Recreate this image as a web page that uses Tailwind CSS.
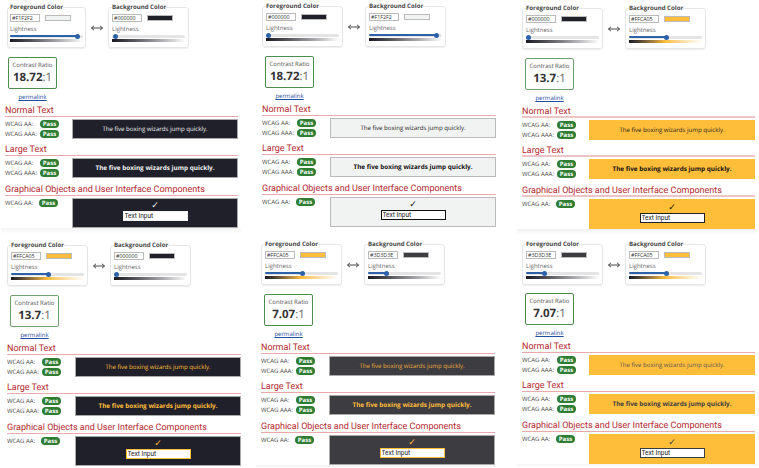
<!DOCTYPE html>
<html lang="en">
<head>
<meta charset="utf-8">
<title>Contrast ratio comparison</title>
<script src="https://cdn.jsdelivr.net/npm/@tailwindcss/browser@4"></script>
</head>
<body class="bg-white">
<main class="w-[759px] h-[468px] overflow-hidden grid grid-cols-[255px_255px_249px] grid-rows-[234px_234px] font-['Open_Sans',sans-serif] text-[#444] whitespace-nowrap [text-rendering:geometricPrecision]">

<!-- Panel 1 -->
<section class="pt-[3px] pl-[7px] w-[240px]">
  <div class="flex h-[45px]">
    <fieldset class="w-[78px] h-[45px] border border-[#e6e6e6] rounded-[3px] px-[2px] shadow-[0_1px_1px_#eee]">
      <legend class="px-0 text-[6.100px] leading-[8px] font-bold">Foreground Color</legend>
      <div class="flex items-center gap-[5px] mt-[3px]"><input readonly value="#F1F2F2" class="w-[30px] h-[8px] border border-[#bbb] px-[1px] text-[5.300px] leading-[6px] text-[#333]"><span class="w-[26px] h-[6px] border border-[#bbb] bg-[#f1f2f2]"></span></div>
      <p class="text-[6px] leading-[8px] mt-[3px] text-[#666]">Lightness</p>
      <div class="relative h-[3px] mt-[2px] w-[73px] bg-[#e4e4e4] rounded-full"><div class="h-[2px] w-[67px] bg-[#2d62a8] rounded-full"></div><span class="absolute left-[65px] -top-[1px] w-[5px] h-[5px] rounded-full bg-[#2d62a8]"></span></div>
      <div class="h-[3px] mt-[1px] w-[73px] bg-linear-to-r from-[#1a1a22] to-white"></div>
    </fieldset>
    <div class="w-[22px] h-[41px] mt-[4px] flex items-center justify-center"><svg width="12" height="6" viewBox="0 0 12 6" fill="none" stroke="#333" stroke-width=".9"><path d="M.5 3h11M3 .8.5 3 3 5.2M9 .8 11.500 3 9 5.200"/></svg></div>
    <fieldset class="w-[81px] h-[45px] border border-[#e6e6e6] rounded-[3px] px-[3px] shadow-[0_1px_1px_#eee]">
      <legend class="px-0 text-[6.100px] leading-[8px] font-bold">Background Color</legend>
      <div class="flex items-center gap-[5px] mt-[3px]"><input readonly value="#000000" class="w-[30px] h-[8px] border border-[#bbb] px-[1px] text-[5.300px] leading-[6px] text-[#333]"><span class="w-[26px] h-[6px] border border-[#bbb] bg-[#1f2029]"></span></div>
      <p class="text-[6px] leading-[8px] mt-[3px] text-[#666]">Lightness</p>
      <div class="relative h-[3px] mt-[2px] w-[73px] bg-[#e4e4e4] rounded-full"><span class="absolute left-[1px] -top-[1px] w-[5px] h-[5px] rounded-full bg-[#2d62a8]"></span></div>
      <div class="h-[3px] mt-[1px] w-[73px] bg-linear-to-r from-[#1a1a22] to-white"></div>
    </fieldset>
  </div>
  <div class="ml-[1px] w-[49px] h-[32px] mt-[9px] border border-[#4c8c4c] rounded-[2px] text-center pt-[3px]"><p class="text-[6px] leading-[9px] text-[#555]">Contrast Ratio</p><p class="text-[11.500px] leading-[16px] text-[#333]"><b>18.72</b><span class="text-[#666]">:1</span></p></div>
  <p class="ml-[1px] w-[49px] mt-[3px] h-[10px] text-center text-[6px] leading-[10px] text-[#1f4f9e] underline">permalink</p>
  <div class="-ml-[2px] w-[233px]">
    <h2 class="h-[15px] font-['Roboto',sans-serif] text-[9px] leading-[18px] text-[#b5282f] border-b border-[#e9a9ad]">Normal Text</h2>
    <div class="flex mt-[2px]"><div class="w-[67px] h-[20px] text-[6px]"><p class="flex items-center h-[10px]"><span class="w-[35px]">WCAG AA:</span><b class="w-[19px] h-[8.500px] rounded-full bg-[#2e7d32] text-white text-center leading-[8.500px]">Pass</b></p><p class="flex items-center h-[10px]"><span class="w-[35px]">WCAG AAA:</span><b class="w-[19px] h-[8.500px] rounded-full bg-[#2e7d32] text-white text-center leading-[8.500px]">Pass</b></p></div><div class="w-[166px] h-[20px] flex items-center justify-center bg-[#1f2029] border border-[#aaa] text-[6.100px] text-[#f1f2f2]">The five boxing wizards jump quickly.</div></div>
    <h2 class="h-[17px] font-['Roboto',sans-serif] text-[9px] leading-[22px] text-[#b5282f] border-b border-[#e9a9ad]">Large Text</h2>
    <div class="flex mt-[2px]"><div class="w-[67px] h-[20px] text-[6px]"><p class="flex items-center h-[10px]"><span class="w-[35px]">WCAG AA:</span><b class="w-[19px] h-[8.500px] rounded-full bg-[#2e7d32] text-white text-center leading-[8.500px]">Pass</b></p><p class="flex items-center h-[10px]"><span class="w-[35px]">WCAG AAA:</span><b class="w-[19px] h-[8.500px] rounded-full bg-[#2e7d32] text-white text-center leading-[8.500px]">Pass</b></p></div><div class="w-[166px] h-[20px] flex items-center justify-center bg-[#1f2029] border border-[#aaa] text-[6.400px] font-bold text-[#f1f2f2]">The five boxing wizards jump quickly.</div></div>
    <h2 class="h-[18px] font-['Roboto',sans-serif] text-[9px] leading-[24px] text-[#b5282f] border-b border-[#e9a9ad]">Graphical Objects and User Interface Components</h2>
    <div class="flex mt-[2px]"><div class="w-[67px] h-[10px] text-[6px]"><p class="flex items-center h-[10px]"><span class="w-[34px]">WCAG AA:</span><b class="w-[19px] h-[8.500px] rounded-full bg-[#2e7d32] text-white text-center leading-[8.500px]">Pass</b></p></div><div class="w-[166px] h-[30px] flex flex-col items-center justify-end pb-[6px] bg-[#1f2029] border border-[#aaa]"><span class="font-['DejaVu_Sans',sans-serif] text-[9px] leading-[10px] text-[#f1f2f2]">✓</span><input readonly value="Text Input" class="w-[65px] h-[10px] bg-white border border-[#f1f2f2] px-[1px] font-['Roboto',sans-serif] text-[6.500px] text-[#222]"></div></div>
    <div class="h-[6px] -ml-[4px] w-[240px] bg-linear-to-b from-[#f4f4f4] to-white"></div>
  </div>
</section>

<!-- Panel 2 -->
<section class="pt-[2px] pl-[7px] w-[240px]">
  <div class="flex h-[45px]">
    <fieldset class="w-[80px] h-[45px] border border-[#e6e6e6] rounded-[3px] px-[3px] shadow-[0_1px_1px_#eee]">
      <legend class="px-0 text-[6.100px] leading-[8px] font-bold">Foreground Color</legend>
      <div class="flex items-center gap-[5px] mt-[3px]"><input readonly value="#000000" class="w-[30px] h-[8px] border border-[#bbb] px-[1px] text-[5.300px] leading-[6px] text-[#333]"><span class="w-[26px] h-[6px] border border-[#bbb] bg-[#1f2029]"></span></div>
      <p class="text-[6px] leading-[8px] mt-[3px] text-[#666]">Lightness</p>
      <div class="relative h-[3px] mt-[2px] w-[73px] bg-[#e4e4e4] rounded-full"><span class="absolute left-[0px] -top-[1px] w-[5px] h-[5px] rounded-full bg-[#2d62a8]"></span></div>
      <div class="h-[3px] mt-[1px] w-[73px] bg-linear-to-r from-[#1a1a22] to-white"></div>
    </fieldset>
    <div class="w-[22px] h-[41px] mt-[4px] flex items-center justify-center"><svg width="12" height="6" viewBox="0 0 12 6" fill="none" stroke="#333" stroke-width=".9"><path d="M.5 3h11M3 .8.5 3 3 5.2M9 .8 11.500 3 9 5.200"/></svg></div>
    <fieldset class="w-[81px] h-[45px] border border-[#e6e6e6] rounded-[3px] px-[3px] shadow-[0_1px_1px_#eee]">
      <legend class="px-0 text-[6.100px] leading-[8px] font-bold">Background Color</legend>
      <div class="flex items-center gap-[5px] mt-[3px]"><input readonly value="#F1F2F2" class="w-[30px] h-[8px] border border-[#bbb] px-[1px] text-[5.300px] leading-[6px] text-[#333]"><span class="w-[26px] h-[6px] border border-[#bbb] bg-[#f1f2f2]"></span></div>
      <p class="text-[6px] leading-[8px] mt-[3px] text-[#666]">Lightness</p>
      <div class="relative h-[3px] mt-[2px] w-[73px] bg-[#e4e4e4] rounded-full"><div class="h-[2px] w-[67px] bg-[#2d62a8] rounded-full"></div><span class="absolute left-[65px] -top-[1px] w-[5px] h-[5px] rounded-full bg-[#2d62a8]"></span></div>
      <div class="h-[3px] mt-[1px] w-[73px] bg-linear-to-r from-[#1a1a22] to-white"></div>
    </fieldset>
  </div>
  <div class="ml-[3px] w-[49px] h-[32px] mt-[9px] border border-[#4c8c4c] rounded-[2px] text-center pt-[3px]"><p class="text-[6px] leading-[9px] text-[#555]">Contrast Ratio</p><p class="text-[11.500px] leading-[16px] text-[#333]"><b>18.72</b><span class="text-[#666]">:1</span></p></div>
  <p class="ml-[3px] w-[49px] mt-[3px] h-[10px] text-center text-[6px] leading-[10px] text-[#1f4f9e] underline">permalink</p>
  <div class="w-[234px]">
    <h2 class="h-[15px] font-['Roboto',sans-serif] text-[9px] leading-[18px] text-[#b5282f] border-b border-[#e9a9ad]">Normal Text</h2>
    <div class="flex mt-[2px]"><div class="w-[68px] h-[20px] text-[6px]"><p class="flex items-center h-[10px]"><span class="w-[35px]">WCAG AA:</span><b class="w-[19px] h-[8.500px] rounded-full bg-[#2e7d32] text-white text-center leading-[8.500px]">Pass</b></p><p class="flex items-center h-[10px]"><span class="w-[35px]">WCAG AAA:</span><b class="w-[19px] h-[8.500px] rounded-full bg-[#2e7d32] text-white text-center leading-[8.500px]">Pass</b></p></div><div class="w-[166px] h-[20px] flex items-center justify-center bg-[#f1f2f2] border border-[#bbb] text-[6.100px] text-[#222]">The five boxing wizards jump quickly.</div></div>
    <h2 class="h-[17px] font-['Roboto',sans-serif] text-[9px] leading-[22px] text-[#b5282f] border-b border-[#e9a9ad]">Large Text</h2>
    <div class="flex mt-[2px]"><div class="w-[68px] h-[20px] text-[6px]"><p class="flex items-center h-[10px]"><span class="w-[35px]">WCAG AA:</span><b class="w-[19px] h-[8.500px] rounded-full bg-[#2e7d32] text-white text-center leading-[8.500px]">Pass</b></p><p class="flex items-center h-[10px]"><span class="w-[35px]">WCAG AAA:</span><b class="w-[19px] h-[8.500px] rounded-full bg-[#2e7d32] text-white text-center leading-[8.500px]">Pass</b></p></div><div class="w-[166px] h-[20px] flex items-center justify-center bg-[#f1f2f2] border border-[#bbb] text-[6.400px] font-bold text-[#111]">The five boxing wizards jump quickly.</div></div>
    <h2 class="h-[18px] font-['Roboto',sans-serif] text-[9px] leading-[24px] text-[#b5282f] border-b border-[#e9a9ad]">Graphical Objects and User Interface Components</h2>
    <div class="flex mt-[2px]"><div class="w-[68px] h-[10px] text-[6px]"><p class="flex items-center h-[10px]"><span class="w-[34px]">WCAG AA:</span><b class="w-[19px] h-[8.500px] rounded-full bg-[#2e7d32] text-white text-center leading-[8.500px]">Pass</b></p></div><div class="w-[166px] h-[30px] flex flex-col items-center justify-end pb-[6px] bg-[#f1f2f2] border border-[#bbb]"><span class="font-['DejaVu_Sans',sans-serif] text-[9px] leading-[10px] text-[#111]">✓</span><input readonly value="Text Input" class="w-[65px] h-[10px] bg-white border border-[#111] px-[1px] font-['Roboto',sans-serif] text-[6.500px] text-[#222]"></div></div>
  </div>
</section>

<!-- Panel 3 -->
<section class="pt-[4px] pl-[12px] w-[245px]">
  <div class="flex h-[45px]">
    <fieldset class="w-[80px] h-[45px] border border-[#e6e6e6] rounded-[3px] px-[3px] shadow-[0_1px_1px_#eee]">
      <legend class="px-0 text-[6.100px] leading-[8px] font-bold">Foreground Color</legend>
      <div class="flex items-center gap-[5px] mt-[3px]"><input readonly value="#000000" class="w-[30px] h-[8px] border border-[#bbb] px-[1px] text-[5.300px] leading-[6px] text-[#333]"><span class="w-[26px] h-[6px] border border-[#bbb] bg-[#1f2029]"></span></div>
      <p class="text-[6px] leading-[8px] mt-[3px] text-[#666]">Lightness</p>
      <div class="relative h-[3px] mt-[2px] w-[73px] bg-[#e4e4e4] rounded-full"><span class="absolute left-[0px] -top-[1px] w-[5px] h-[5px] rounded-full bg-[#2d62a8]"></span></div>
      <div class="h-[3px] mt-[1px] w-[73px] bg-linear-to-r from-[#1a1a22] to-white"></div>
    </fieldset>
    <div class="w-[22px] h-[41px] mt-[4px] flex items-center justify-center"><svg width="12" height="6" viewBox="0 0 12 6" fill="none" stroke="#333" stroke-width=".9"><path d="M.5 3h11M3 .8.5 3 3 5.2M9 .8 11.500 3 9 5.200"/></svg></div>
    <fieldset class="w-[81px] h-[45px] border border-[#e6e6e6] rounded-[3px] px-[3px] shadow-[0_1px_1px_#eee]">
      <legend class="px-0 text-[6.100px] leading-[8px] font-bold">Background Color</legend>
      <div class="flex items-center gap-[5px] mt-[3px]"><input readonly value="#FFCA05" class="w-[30px] h-[8px] border border-[#bbb] px-[1px] text-[5.300px] leading-[6px] text-[#333]"><span class="w-[26px] h-[6px] border border-[#bbb] bg-[#ffbe3a]"></span></div>
      <p class="text-[6px] leading-[8px] mt-[3px] text-[#666]">Lightness</p>
      <div class="relative h-[3px] mt-[2px] w-[73px] bg-[#e4e4e4] rounded-full"><div class="h-[2px] w-[37px] bg-[#2d62a8] rounded-full"></div><span class="absolute left-[35px] -top-[1px] w-[5px] h-[5px] rounded-full bg-[#2d62a8]"></span></div>
      <div class="h-[3px] mt-[1px] w-[73px] bg-linear-to-r from-[#1a1a22] via-[#ffbe3a] to-white"></div>
    </fieldset>
  </div>
  <div class="ml-[3px] w-[49px] h-[32px] mt-[9px] border border-[#6f9f6f] rounded-[2px] text-center pt-[3px]"><p class="text-[6px] leading-[9px] text-[#555]">Contrast Ratio</p><p class="text-[11.500px] leading-[16px] text-[#333]"><b>13.7</b><span class="text-[#666]">:1</span></p></div>
  <p class="ml-[3px] w-[49px] mt-[3px] h-[10px] text-center text-[6px] leading-[10px] text-[#1f4f9e] underline">permalink</p>
  <div class="w-[233px]">
    <h2 class="h-[15px] font-['Roboto',sans-serif] text-[9px] leading-[18px] text-[#b5282f] border-b-2 border-[#efc4c6]">Normal Text</h2>
    <div class="flex mt-[2px]"><div class="w-[67px] h-[20px] text-[6px]"><p class="flex items-center h-[10px]"><span class="w-[35px]">WCAG AA:</span><b class="w-[19px] h-[8.500px] rounded-full bg-[#2e7d32] text-white text-center leading-[8.500px]">Pass</b></p><p class="flex items-center h-[10px]"><span class="w-[35px]">WCAG AAA:</span><b class="w-[19px] h-[8.500px] rounded-full bg-[#2e7d32] text-white text-center leading-[8.500px]">Pass</b></p></div><div class="w-[166px] h-[20px] flex items-center justify-center bg-[#ffbe3a] text-[6.100px] text-[#222]">The five boxing wizards jump quickly.</div></div>
    <h2 class="h-[17px] font-['Roboto',sans-serif] text-[9px] leading-[22px] text-[#b5282f] border-b-2 border-[#efc4c6]">Large Text</h2>
    <div class="flex mt-[2px]"><div class="w-[67px] h-[20px] text-[6px]"><p class="flex items-center h-[10px]"><span class="w-[35px]">WCAG AA:</span><b class="w-[19px] h-[8.500px] rounded-full bg-[#2e7d32] text-white text-center leading-[8.500px]">Pass</b></p><p class="flex items-center h-[10px]"><span class="w-[35px]">WCAG AAA:</span><b class="w-[19px] h-[8.500px] rounded-full bg-[#2e7d32] text-white text-center leading-[8.500px]">Pass</b></p></div><div class="w-[166px] h-[20px] flex items-center justify-center bg-[#ffbe3a] text-[6.400px] font-bold text-[#111]">The five boxing wizards jump quickly.</div></div>
    <h2 class="h-[18px] font-['Roboto',sans-serif] text-[9px] leading-[24px] text-[#b5282f] border-b-2 border-[#efc4c6]">Graphical Objects and User Interface Components</h2>
    <div class="flex mt-[2px]"><div class="w-[67px] h-[10px] text-[6px]"><p class="flex items-center h-[10px]"><span class="w-[34px]">WCAG AA:</span><b class="w-[19px] h-[8.500px] rounded-full bg-[#2e7d32] text-white text-center leading-[8.500px]">Pass</b></p></div><div class="w-[166px] h-[30px] flex flex-col items-center justify-end pb-[6px] bg-[#ffbe3a]"><span class="font-['DejaVu_Sans',sans-serif] text-[9px] leading-[10px] text-[#111]">✓</span><input readonly value="Text Input" class="w-[65px] h-[10px] bg-white border border-[#222] px-[1px] font-['Roboto',sans-serif] text-[6.500px] text-[#222]"></div></div>
    <div class="h-[5px] -ml-[5px] w-[240px] bg-linear-to-b from-[#f0f0f0] to-white"></div>
  </div>
</section>

<!-- Panel 4 -->
<section class="pt-[7px] pl-[7px] w-[240px]">
  <div class="flex h-[45px]">
    <fieldset class="w-[80px] h-[45px] border border-[#e6e6e6] rounded-[3px] px-[3px] shadow-[0_1px_1px_#eee]">
      <legend class="px-0 text-[6.100px] leading-[8px] font-bold">Foreground Color</legend>
      <div class="flex items-center gap-[5px] mt-[3px]"><input readonly value="#FFCA05" class="w-[30px] h-[8px] border border-[#bbb] px-[1px] text-[5.300px] leading-[6px] text-[#333]"><span class="w-[26px] h-[6px] border border-[#bbb] bg-[#ffbe3a]"></span></div>
      <p class="text-[6px] leading-[8px] mt-[3px] text-[#666]">Lightness</p>
      <div class="relative h-[3px] mt-[2px] w-[73px] bg-[#e4e4e4] rounded-full"><div class="h-[2px] w-[37px] bg-[#2d62a8] rounded-full"></div><span class="absolute left-[35px] -top-[1px] w-[5px] h-[5px] rounded-full bg-[#2d62a8]"></span></div>
      <div class="h-[3px] mt-[1px] w-[73px] bg-linear-to-r from-[#1a1a22] via-[#ffbe3a] to-white"></div>
    </fieldset>
    <div class="w-[22px] h-[41px] mt-[4px] flex items-center justify-center"><svg width="12" height="6" viewBox="0 0 12 6" fill="none" stroke="#333" stroke-width=".9"><path d="M.5 3h11M3 .8.5 3 3 5.2M9 .8 11.500 3 9 5.200"/></svg></div>
    <fieldset class="w-[81px] h-[45px] border border-[#e6e6e6] rounded-[3px] px-[3px] shadow-[0_1px_1px_#eee]">
      <legend class="px-0 text-[6.100px] leading-[8px] font-bold">Background Color</legend>
      <div class="flex items-center gap-[5px] mt-[3px]"><input readonly value="#000000" class="w-[30px] h-[8px] border border-[#bbb] px-[1px] text-[5.300px] leading-[6px] text-[#333]"><span class="w-[26px] h-[6px] border border-[#bbb] bg-[#1f2029]"></span></div>
      <p class="text-[6px] leading-[8px] mt-[3px] text-[#666]">Lightness</p>
      <div class="relative h-[3px] mt-[2px] w-[73px] bg-[#e4e4e4] rounded-full"><span class="absolute left-[0px] -top-[1px] w-[5px] h-[5px] rounded-full bg-[#2d62a8]"></span></div>
      <div class="h-[3px] mt-[1px] w-[73px] bg-linear-to-r from-[#1a1a22] to-white"></div>
    </fieldset>
  </div>
  <div class="ml-[3px] w-[49px] h-[32px] mt-[9px] border border-[#6f9f6f] rounded-[2px] text-center pt-[3px]"><p class="text-[6px] leading-[9px] text-[#555]">Contrast Ratio</p><p class="text-[11.500px] leading-[16px] text-[#333]"><b>13.7</b><span class="text-[#666]">:1</span></p></div>
  <p class="ml-[3px] w-[49px] mt-[3px] h-[10px] text-center text-[6px] leading-[10px] text-[#1f4f9e] underline">permalink</p>
  <div class="w-[234px]">
    <h2 class="h-[15px] font-['Roboto',sans-serif] text-[9px] leading-[18px] text-[#b5282f] border-b border-[#e9a9ad]">Normal Text</h2>
    <div class="flex mt-[2px]"><div class="w-[68px] h-[20px] text-[6px]"><p class="flex items-center h-[10px]"><span class="w-[35px]">WCAG AA:</span><b class="w-[19px] h-[8.500px] rounded-full bg-[#2e7d32] text-white text-center leading-[8.500px]">Pass</b></p><p class="flex items-center h-[10px]"><span class="w-[35px]">WCAG AAA:</span><b class="w-[19px] h-[8.500px] rounded-full bg-[#2e7d32] text-white text-center leading-[8.500px]">Pass</b></p></div><div class="w-[166px] h-[20px] flex items-center justify-center bg-[#1f2029] border border-[#aaa] text-[6.100px] text-[#ffbe3a]">The five boxing wizards jump quickly.</div></div>
    <h2 class="h-[17px] font-['Roboto',sans-serif] text-[9px] leading-[22px] text-[#b5282f] border-b border-[#e9a9ad]">Large Text</h2>
    <div class="flex mt-[2px]"><div class="w-[68px] h-[20px] text-[6px]"><p class="flex items-center h-[10px]"><span class="w-[35px]">WCAG AA:</span><b class="w-[19px] h-[8.500px] rounded-full bg-[#2e7d32] text-white text-center leading-[8.500px]">Pass</b></p><p class="flex items-center h-[10px]"><span class="w-[35px]">WCAG AAA:</span><b class="w-[19px] h-[8.500px] rounded-full bg-[#2e7d32] text-white text-center leading-[8.500px]">Pass</b></p></div><div class="w-[166px] h-[20px] flex items-center justify-center bg-[#1f2029] border border-[#aaa] text-[6.400px] font-bold text-[#ffbe3a]">The five boxing wizards jump quickly.</div></div>
    <h2 class="h-[18px] font-['Roboto',sans-serif] text-[9px] leading-[24px] text-[#b5282f] border-b border-[#e9a9ad]">Graphical Objects and User Interface Components</h2>
    <div class="flex mt-[2px]"><div class="w-[68px] h-[10px] text-[6px]"><p class="flex items-center h-[10px]"><span class="w-[34px]">WCAG AA:</span><b class="w-[19px] h-[8.500px] rounded-full bg-[#2e7d32] text-white text-center leading-[8.500px]">Pass</b></p></div><div class="w-[166px] h-[30px] flex flex-col items-center justify-end pb-[6px] bg-[#1f2029] border border-[#aaa]"><span class="font-['DejaVu_Sans',sans-serif] text-[9px] leading-[10px] text-[#ffbe3a]">✓</span><input readonly value="Text Input" class="w-[65px] h-[10px] bg-white border border-[#ffbe3a] px-[1px] font-['Roboto',sans-serif] text-[6.500px] text-[#222]"></div></div>
  </div>
</section>

<!-- Panel 5 -->
<section class="pt-[6px] pl-[6px] w-[240px]">
  <div class="flex h-[45px]">
    <fieldset class="w-[80px] h-[45px] border border-[#e6e6e6] rounded-[3px] px-[3px] shadow-[0_1px_1px_#eee]">
      <legend class="px-0 text-[6.100px] leading-[8px] font-bold">Foreground Color</legend>
      <div class="flex items-center gap-[5px] mt-[3px]"><input readonly value="#FFCA05" class="w-[30px] h-[8px] border border-[#bbb] px-[1px] text-[5.300px] leading-[6px] text-[#333]"><span class="w-[26px] h-[6px] border border-[#bbb] bg-[#ffbe3a]"></span></div>
      <p class="text-[6px] leading-[8px] mt-[3px] text-[#666]">Lightness</p>
      <div class="relative h-[3px] mt-[2px] w-[73px] bg-[#e4e4e4] rounded-full"><div class="h-[2px] w-[37px] bg-[#2d62a8] rounded-full"></div><span class="absolute left-[35px] -top-[1px] w-[5px] h-[5px] rounded-full bg-[#2d62a8]"></span></div>
      <div class="h-[3px] mt-[1px] w-[73px] bg-linear-to-r from-[#1a1a22] via-[#ffbe3a] to-white"></div>
    </fieldset>
    <div class="w-[22px] h-[41px] mt-[4px] flex items-center justify-center"><svg width="12" height="6" viewBox="0 0 12 6" fill="none" stroke="#333" stroke-width=".9"><path d="M.5 3h11M3 .8.5 3 3 5.2M9 .8 11.500 3 9 5.200"/></svg></div>
    <fieldset class="w-[81px] h-[45px] border border-[#e6e6e6] rounded-[3px] px-[3px] shadow-[0_1px_1px_#eee]">
      <legend class="px-0 text-[6.100px] leading-[8px] font-bold">Background Color</legend>
      <div class="flex items-center gap-[5px] mt-[3px]"><input readonly value="#3D3D3E" class="w-[30px] h-[8px] border border-[#bbb] px-[1px] text-[5.300px] leading-[6px] text-[#333]"><span class="w-[26px] h-[6px] border border-[#bbb] bg-[#3d3c41]"></span></div>
      <p class="text-[6px] leading-[8px] mt-[3px] text-[#666]">Lightness</p>
      <div class="relative h-[3px] mt-[2px] w-[73px] bg-[#e4e4e4] rounded-full"><div class="h-[2px] w-[18px] bg-[#2d62a8] rounded-full"></div><span class="absolute left-[16px] -top-[1px] w-[5px] h-[5px] rounded-full bg-[#2d62a8]"></span></div>
      <div class="h-[3px] mt-[1px] w-[73px] bg-linear-to-r from-[#1a1a22] to-white"></div>
    </fieldset>
  </div>
  <div class="ml-[3px] w-[49px] h-[32px] mt-[9px] border border-[#4c8c4c] rounded-[2px] text-center pt-[3px]"><p class="text-[6px] leading-[9px] text-[#555]">Contrast Ratio</p><p class="text-[11.500px] leading-[16px] text-[#333]"><b>7.07</b><span class="text-[#666]">:1</span></p></div>
  <p class="ml-[3px] w-[49px] mt-[3px] h-[10px] text-center text-[6px] leading-[10px] text-[#1f4f9e] underline">permalink</p>
  <div class="w-[234px]">
    <h2 class="h-[15px] font-['Roboto',sans-serif] text-[9px] leading-[18px] text-[#b5282f] border-b border-[#e9a9ad]">Normal Text</h2>
    <div class="flex mt-[2px]"><div class="w-[68px] h-[20px] text-[6px]"><p class="flex items-center h-[10px]"><span class="w-[35px]">WCAG AA:</span><b class="w-[19px] h-[8.500px] rounded-full bg-[#2e7d32] text-white text-center leading-[8.500px]">Pass</b></p><p class="flex items-center h-[10px]"><span class="w-[35px]">WCAG AAA:</span><b class="w-[19px] h-[8.500px] rounded-full bg-[#2e7d32] text-white text-center leading-[8.500px]">Pass</b></p></div><div class="w-[166px] h-[20px] flex items-center justify-center bg-[#3d3c41] border border-[#aaa] text-[6.100px] text-[#e8ad3a]">The five boxing wizards jump quickly.</div></div>
    <h2 class="h-[17px] font-['Roboto',sans-serif] text-[9px] leading-[22px] text-[#b5282f] border-b border-[#e9a9ad]">Large Text</h2>
    <div class="flex mt-[2px]"><div class="w-[68px] h-[20px] text-[6px]"><p class="flex items-center h-[10px]"><span class="w-[35px]">WCAG AA:</span><b class="w-[19px] h-[8.500px] rounded-full bg-[#2e7d32] text-white text-center leading-[8.500px]">Pass</b></p><p class="flex items-center h-[10px]"><span class="w-[35px]">WCAG AAA:</span><b class="w-[19px] h-[8.500px] rounded-full bg-[#2e7d32] text-white text-center leading-[8.500px]">Pass</b></p></div><div class="w-[166px] h-[20px] flex items-center justify-center bg-[#3d3c41] border border-[#aaa] text-[6.400px] font-bold text-[#ffbe3a]">The five boxing wizards jump quickly.</div></div>
    <h2 class="h-[18px] font-['Roboto',sans-serif] text-[9px] leading-[24px] text-[#b5282f] border-b border-[#e9a9ad]">Graphical Objects and User Interface Components</h2>
    <div class="flex mt-[2px]"><div class="w-[68px] h-[10px] text-[6px]"><p class="flex items-center h-[10px]"><span class="w-[34px]">WCAG AA:</span><b class="w-[19px] h-[8.500px] rounded-full bg-[#2e7d32] text-white text-center leading-[8.500px]">Pass</b></p></div><div class="w-[166px] h-[30px] flex flex-col items-center justify-end pb-[6px] bg-[#3d3c41] border border-[#aaa]"><span class="font-['DejaVu_Sans',sans-serif] text-[9px] leading-[10px] text-[#ffbe3a]">✓</span><input readonly value="Text Input" class="w-[65px] h-[10px] bg-white border border-[#ffbe3a] px-[1px] font-['Roboto',sans-serif] text-[6.500px] text-[#222]"></div></div>
    <div class="h-[4px] -ml-[5px] w-[240px] bg-linear-to-b from-[#f2f2f2] to-white"></div>
  </div>
</section>

<!-- Panel 6 -->
<section class="pt-[6px] pl-[12px] w-[245px]">
  <div class="flex h-[45px]">
    <fieldset class="w-[80px] h-[45px] border border-[#e6e6e6] rounded-[3px] px-[3px] shadow-[0_1px_1px_#eee]">
      <legend class="px-0 text-[6.100px] leading-[8px] font-bold">Foreground Color</legend>
      <div class="flex items-center gap-[5px] mt-[3px]"><input readonly value="#3D3D3E" class="w-[30px] h-[8px] border border-[#bbb] px-[1px] text-[5.300px] leading-[6px] text-[#333]"><span class="w-[26px] h-[6px] border border-[#bbb] bg-[#3d3c41]"></span></div>
      <p class="text-[6px] leading-[8px] mt-[3px] text-[#666]">Lightness</p>
      <div class="relative h-[3px] mt-[2px] w-[73px] bg-[#e4e4e4] rounded-full"><div class="h-[2px] w-[18px] bg-[#2d62a8] rounded-full"></div><span class="absolute left-[16px] -top-[1px] w-[5px] h-[5px] rounded-full bg-[#2d62a8]"></span></div>
      <div class="h-[3px] mt-[1px] w-[73px] bg-linear-to-r from-[#1a1a22] to-white"></div>
    </fieldset>
    <div class="w-[22px] h-[41px] mt-[4px] flex items-center justify-center"><svg width="12" height="6" viewBox="0 0 12 6" fill="none" stroke="#333" stroke-width=".9"><path d="M.5 3h11M3 .8.5 3 3 5.2M9 .8 11.500 3 9 5.200"/></svg></div>
    <fieldset class="w-[81px] h-[45px] border border-[#e6e6e6] rounded-[3px] px-[3px] shadow-[0_1px_1px_#eee]">
      <legend class="px-0 text-[6.100px] leading-[8px] font-bold">Background Color</legend>
      <div class="flex items-center gap-[5px] mt-[3px]"><input readonly value="#FFCA05" class="w-[30px] h-[8px] border border-[#bbb] px-[1px] text-[5.300px] leading-[6px] text-[#333]"><span class="w-[26px] h-[6px] border border-[#bbb] bg-[#ffbe3a]"></span></div>
      <p class="text-[6px] leading-[8px] mt-[3px] text-[#666]">Lightness</p>
      <div class="relative h-[3px] mt-[2px] w-[73px] bg-[#e4e4e4] rounded-full"><div class="h-[2px] w-[37px] bg-[#2d62a8] rounded-full"></div><span class="absolute left-[35px] -top-[1px] w-[5px] h-[5px] rounded-full bg-[#2d62a8]"></span></div>
      <div class="h-[3px] mt-[1px] w-[73px] bg-linear-to-r from-[#1a1a22] via-[#ffbe3a] to-white"></div>
    </fieldset>
  </div>
  <div class="ml-[3px] w-[49px] h-[32px] mt-[8px] border border-[#4c8c4c] rounded-[2px] text-center pt-[3px]"><p class="text-[6px] leading-[9px] text-[#555]">Contrast Ratio</p><p class="text-[11.500px] leading-[16px] text-[#333]"><b>7.07</b><span class="text-[#666]">:1</span></p></div>
  <p class="ml-[3px] w-[49px] mt-[3px] h-[10px] text-center text-[6px] leading-[10px] text-[#1f4f9e] underline">permalink</p>
  <div class="w-[233px]">
    <h2 class="h-[15px] font-['Roboto',sans-serif] text-[9px] leading-[18px] text-[#b5282f] border-b border-[#e9a9ad]">Normal Text</h2>
    <div class="flex mt-[2px]"><div class="w-[67px] h-[20px] text-[6px]"><p class="flex items-center h-[10px]"><span class="w-[35px]">WCAG AA:</span><b class="w-[19px] h-[8.500px] rounded-full bg-[#2e7d32] text-white text-center leading-[8.500px]">Pass</b></p><p class="flex items-center h-[10px]"><span class="w-[35px]">WCAG AAA:</span><b class="w-[19px] h-[8.500px] rounded-full bg-[#2e7d32] text-white text-center leading-[8.500px]">Pass</b></p></div><div class="w-[166px] h-[20px] flex items-center justify-center bg-[#ffbe3a] text-[6.100px] text-[#555]">The five boxing wizards jump quickly.</div></div>
    <h2 class="h-[17px] font-['Roboto',sans-serif] text-[9px] leading-[22px] text-[#b5282f] border-b border-[#e9a9ad]">Large Text</h2>
    <div class="flex mt-[2px]"><div class="w-[67px] h-[20px] text-[6px]"><p class="flex items-center h-[10px]"><span class="w-[35px]">WCAG AA:</span><b class="w-[19px] h-[8.500px] rounded-full bg-[#2e7d32] text-white text-center leading-[8.500px]">Pass</b></p><p class="flex items-center h-[10px]"><span class="w-[35px]">WCAG AAA:</span><b class="w-[19px] h-[8.500px] rounded-full bg-[#2e7d32] text-white text-center leading-[8.500px]">Pass</b></p></div><div class="w-[166px] h-[20px] flex items-center justify-center bg-[#ffbe3a] text-[6.400px] font-bold text-[#3d3c41]">The five boxing wizards jump quickly.</div></div>
    <h2 class="h-[18px] font-['Roboto',sans-serif] text-[9px] leading-[24px] text-[#b5282f] border-b border-[#e9a9ad]">Graphical Objects and User Interface Components</h2>
    <div class="flex mt-[2px]"><div class="w-[67px] h-[10px] text-[6px]"><p class="flex items-center h-[10px]"><span class="w-[34px]">WCAG AA:</span><b class="w-[19px] h-[8.500px] rounded-full bg-[#2e7d32] text-white text-center leading-[8.500px]">Pass</b></p></div><div class="w-[166px] h-[30px] flex flex-col items-center justify-end pb-[6px] bg-[#ffbe3a]"><span class="font-['DejaVu_Sans',sans-serif] text-[9px] leading-[10px] text-[#3d3c41]">✓</span><input readonly value="Text Input" class="w-[65px] h-[10px] bg-white border border-[#3d3c41] px-[1px] font-['Roboto',sans-serif] text-[6.500px] text-[#222]"></div></div>
    <div class="h-[3px] -ml-[5px] w-[240px] bg-linear-to-b from-[#f2f2f2] to-white"></div>
  </div>
</section>

</main>
</body>
</html>
